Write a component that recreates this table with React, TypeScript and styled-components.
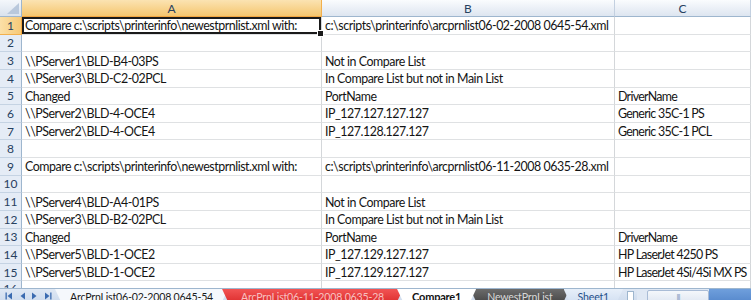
import { FC } from 'react';
import styled, { createGlobalStyle } from 'styled-components';

const GlobalStyle = createGlobalStyle`
  html, body {
    margin: 0;
    padding: 0;
    background: #ffffff;
  }
  body {
    width: 751px;
    height: 300px;
    overflow: hidden;
    font-family: Lato, 'Open Sans', sans-serif;
  }
`;

const Window = styled.div`
  display: flex;
  flex-direction: column;
  width: 751px;
  height: 306px;
`;

const Sheet = styled.div`
  display: grid;
  grid-template-columns: 22px 300px 293px 1fr;
  grid-template-rows: 17px repeat(15, 17.64px) 1fr;
  flex: 1;
  overflow: hidden;
  background: #ffffff;
`;

const Corner = styled.div`
  position: relative;
  background: linear-gradient(#f4f7fb, #d9e2ee);
  border-right: 1px solid #9eb6ce;
  border-bottom: 1px solid #9eb6ce;

  &::after {
    content: '';
    position: absolute;
    right: 2px;
    bottom: 2px;
    border-left: 12px solid transparent;
    border-bottom: 11px solid #b9c8dc;
  }
`;

const ColHeader = styled.div<{ $selected?: boolean }>`
  display: flex;
  align-items: center;
  justify-content: center;
  font-size: 12px;
  color: #27415f;
  background: ${({ $selected }) =>
    $selected ? 'linear-gradient(#fbe3b2, #f5c66f)' : 'linear-gradient(#fafcfe, #dde5f0)'};
  border-right: 1px solid ${({ $selected }) => ($selected ? '#f2b04d' : '#c3d0e0')};
  border-bottom: 1px solid ${({ $selected }) => ($selected ? '#f2a640' : '#9eb6ce')};
`;

const RowHeader = styled.div<{ $selected?: boolean }>`
  display: flex;
  align-items: center;
  justify-content: center;
  font-size: 12px;
  color: #27415f;
  background: ${({ $selected }) => ($selected ? 'linear-gradient(90deg, #fbe0a8, #f6c978)' : '#e5ecf6')};
  border-right: 1px solid ${({ $selected }) => ($selected ? '#f2a640' : '#9eb6ce')};
  border-bottom: 1px solid ${({ $selected }) => ($selected ? '#f2b04d' : '#c5d3e3')};
`;

const Cell = styled.div<{ $active?: boolean; $narrow?: boolean }>`
  position: relative;
  display: flex;
  align-items: center;
  padding: 1px 3px 0;
  font-size: 12.4px;
  letter-spacing: ${({ $narrow }) => ($narrow ? '-0.7px' : '-0.45px')};
  color: #141414;
  white-space: nowrap;
  overflow: ${({ $active }) => ($active ? 'visible' : 'hidden')};
  border-right: 1px solid #d4d7da;
  border-bottom: 1px solid #dfe1e3;
  box-shadow: ${({ $active }) => ($active ? 'inset 0 0 0 2px #1a1a1a' : 'none')};

  ${({ $active }) =>
    $active &&
    `
    &::after {
      content: '';
      position: absolute;
      right: -3px;
      bottom: -3px;
      width: 5px;
      height: 5px;
      background: #1a1a1a;
      border: 1px solid #ffffff;
      z-index: 2;
    }
  `}
`;

const TabBar = styled.div`
  display: flex;
  align-items: stretch;
  height: 17px;
  background: linear-gradient(#dfe8f4, #c8d7eb);
  border-top: 1px solid #9eb6ce;
`;

const NavButtons = styled.div`
  display: flex;
  align-items: flex-start;
  gap: 5px;
  padding: 3px 0 0 5px;
  width: 55px;
  box-sizing: border-box;
`;

const Tabs = styled.div`
  display: flex;
  align-items: stretch;
  margin-left: 6px;
`;

type TabKind = 'plain' | 'red' | 'active' | 'dark' | 'blue';

const tabColors: Record<TabKind, { bg: string; fg: string; pad: number }> = {
  plain: { bg: '#f5f8fc', fg: '#1a1a1a', pad: 15 },
  red: { bg: 'linear-gradient(#f25454, #d82424)', fg: '#f7c0c0', pad: 19 },
  active: { bg: '#ffffff', fg: '#111111', pad: 15 },
  dark: { bg: 'linear-gradient(#6b6b6b, #3e3e3e)', fg: '#d8d8d8', pad: 17 },
  blue: { bg: 'linear-gradient(#e7eff9, #cddcf0)', fg: '#1f4f8a', pad: 14 },
};

const Tab = styled.div<{ $kind: TabKind }>`
  display: flex;
  align-items: flex-start;
  justify-content: center;
  margin-left: -6px;
  padding: 1px ${({ $kind }) => tabColors[$kind].pad}px 0;
  font-size: ${({ $kind }) => ($kind === 'active' ? '11px' : '10.6px')};
  letter-spacing: -0.2px;
  font-weight: ${({ $kind }) => ($kind === 'active' ? 700 : 400)};
  color: ${({ $kind }) => tabColors[$kind].fg};
  background: ${({ $kind }) => tabColors[$kind].bg};
  clip-path: polygon(0 0, 100% 0, calc(100% - 8px) 100%, 8px 100%);
  line-height: 14px;
  white-space: nowrap;
  z-index: ${({ $kind }) => ($kind === 'active' ? 2 : 1)};
`;

const InsertTab = styled.div`
  width: 5px;
  margin: 2px 3px 0 4px;
  height: 12px;
  background: #ffffff;
  border: 1px solid #9eb6ce;
`;

const ScrollArea = styled.div`
  display: flex;
  flex: 1;
  align-items: flex-start;
  background: linear-gradient(#6f9fdc, #4f82c8);
`;

const ScrollTrack = styled.div`
  display: flex;
  align-items: flex-start;
  width: 72px;
  height: 100%;
  background: #dfe8f4;
`;

const ScrollArrow = styled.div`
  width: 8px;
  padding: 3px 0 0 1px;
`;

const ScrollThumb = styled.div`
  flex: 1;
  height: 14px;
  margin: 1px 0 0 1px;
  display: flex;
  justify-content: center;
  font-size: 7px;
  line-height: 12px;
  color: #8ea4c0;
  letter-spacing: -1px;
  background: linear-gradient(#f4f7fb, #dbe4f0);
  border: 1px solid #a9bcd6;
  border-radius: 2px;
`;

const NavIcon: FC<{ dir: 'left' | 'right'; bar?: boolean }> = ({ dir, bar }) => (
  <svg width="8" height="8" viewBox="0 0 8 8">
    {dir === 'left' ? (
      <>
        {bar && <rect x="0.5" y="0.5" width="1.3" height="7" fill="#3b6bb0" />}
        <polygon points="7,0.5 7,7.5 2.5,4" fill="#3b6bb0" />
      </>
    ) : (
      <>
        <polygon points="1,0.5 1,7.5 5.5,4" fill="#3b6bb0" />
        {bar && <rect x="6.2" y="0.5" width="1.3" height="7" fill="#3b6bb0" />}
      </>
    )}
  </svg>
);

type RowData = [string, string, string];

const rows: RowData[] = [
  ['Compare c:\\scripts\\printerinfo\\newestprnlist.xml with:', 'c:\\scripts\\printerinfo\\arcprnlist06-02-2008 0645-54.xml', ''],
  ['', '', ''],
  ['\\\\PServer1\\BLD-B4-03PS', 'Not in Compare List', ''],
  ['\\\\PServer3\\BLD-C2-02PCL', 'In Compare List but not in Main List', ''],
  ['Changed', 'PortName', 'DriverName'],
  ['\\\\PServer2\\BLD-4-OCE4', 'IP_127.127.127.127', 'Generic 35C-1 PS'],
  ['\\\\PServer2\\BLD-4-OCE4', 'IP_127.128.127.127', 'Generic 35C-1 PCL'],
  ['', '', ''],
  ['Compare c:\\scripts\\printerinfo\\newestprnlist.xml with:', 'c:\\scripts\\printerinfo\\arcprnlist06-11-2008 0635-28.xml', ''],
  ['', '', ''],
  ['\\\\PServer4\\BLD-A4-01PS', 'Not in Compare List', ''],
  ['\\\\PServer3\\BLD-B2-02PCL', 'In Compare List but not in Main List', ''],
  ['Changed', 'PortName', 'DriverName'],
  ['\\\\PServer5\\BLD-1-OCE2', 'IP_127.129.127.127', 'HP LaserJet 4250 PS'],
  ['\\\\PServer5\\BLD-1-OCE2', 'IP_127.129.127.127', 'HP LaserJet 4Si/4Si MX PS'],
  ['', '', ''],
];

const tabs: { label: string; kind: TabKind }[] = [
  { label: 'ArcPrnList06-02-2008 0645-54', kind: 'plain' },
  { label: 'ArcPrnList06-11-2008 0635-28', kind: 'red' },
  { label: 'Compare1', kind: 'active' },
  { label: 'NewestPrnList', kind: 'dark' },
  { label: 'Sheet1', kind: 'blue' },
];

const RowFragment: FC<{ index: number; row: RowData }> = ({ index, row }) => (
  <>
    <RowHeader $selected={index === 0}>{index + 1}</RowHeader>
    {row.map((text, c) => (
      <Cell key={c} $active={index === 0 && c === 0} $narrow={c === 2}>
        {text}
      </Cell>
    ))}
  </>
);

const App: FC = () => (
  <>
    <GlobalStyle />
    <Window>
      <Sheet>
        <Corner />
        <ColHeader $selected>A</ColHeader>
        <ColHeader>B</ColHeader>
        <ColHeader>C</ColHeader>
        {rows.map((row, i) => (
          <RowFragment key={i} index={i} row={row} />
        ))}
      </Sheet>
      <TabBar>
        <NavButtons>
          <NavIcon dir="left" bar />
          <NavIcon dir="left" />
          <NavIcon dir="right" />
          <NavIcon dir="right" bar />
        </NavButtons>
        <Tabs>
          {tabs.map((t) => (
            <Tab key={t.label} $kind={t.kind}>
              {t.label}
            </Tab>
          ))}
        </Tabs>
        <InsertTab />
        <ScrollArea>
          <ScrollTrack>
            <ScrollArrow>
              <NavIcon dir="left" />
            </ScrollArrow>
            <ScrollThumb>III</ScrollThumb>
          </ScrollTrack>
        </ScrollArea>
      </TabBar>
    </Window>
  </>
);

export default App;
